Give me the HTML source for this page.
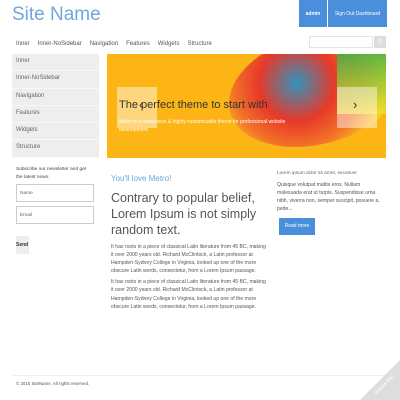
<!DOCTYPE html><html><head><style>
*{margin:0;padding:0;box-sizing:border-box}
html,body{width:400px;height:400px;overflow:hidden}
body{background:#fff;font-family:"Liberation Sans",sans-serif;color:#444;position:relative}
.a{position:absolute}
.nav span{margin-right:8px}
.side div{height:17.3px;background:#eee;border-bottom:1px solid #f8f8f8;padding:4px 0 0 4px;font-size:6px;color:#666}
p{font-size:5.1px;line-height:8.1px;color:#555}
</style></head><body>
<div class="a" style="left:12px;top:4px;font-size:19px;color:#6fa6dc;font-weight:300">Site Name</div>
<div class="a" style="left:299px;top:0;width:28px;height:27px;background:#4a8fdb;color:#fff;font-size:5px;font-weight:bold;text-align:center;line-height:29px">admin</div>
<div class="a" style="left:328px;top:0;width:59px;height:27px;background:#4a8fdb;color:#fff;font-size:5px;text-align:center;line-height:29px">Sign Out Dashboard</div>
<div class="a nav" style="left:16px;top:41px;font-size:6px;color:#555"><span>Inner</span><span>Inner-NoSidebar</span><span>Navigation</span><span>Features</span><span>Widgets</span><span>Structure</span></div>
<div class="a" style="left:309px;top:36px;width:64px;height:12px;border:1px solid #e4e4e4"></div>
<div class="a" style="left:374px;top:36px;width:12px;height:12px;background:#ddd;color:#fff;font-size:6px;text-align:center;line-height:12px">⚲</div>
<div class="a side" style="left:12px;top:54px;width:87px">
<div>Inner</div><div>Inner-NoSidebar</div><div>Navigation</div><div>Features</div><div>Widgets</div><div>Structure</div></div>
<div class="a" style="left:107px;top:54px;width:279px;height:104px;background:#fdb515;overflow:hidden">
<div class="a" style="left:120px;top:-20px;width:180px;height:110px;border-radius:50%;background:radial-gradient(circle at 40% 40%,#1a8fd0 0,#e52b2b 30%,#f06a2a 50%,#fbd023 70%,rgba(253,181,21,0) 72%);opacity:.9;transform:rotate(-15deg)"></div>
<div class="a" style="left:230px;top:0;width:50px;height:60px;background:linear-gradient(#3ab54a,#f5e02a);opacity:.8"></div>
<div class="a" style="left:10px;top:33px;width:40px;height:41px;background:rgba(255,255,255,.45)"></div>
<div class="a" style="left:230px;top:33px;width:40px;height:41px;background:rgba(255,255,255,.45)"></div>
<div class="a" style="left:12px;top:45px;font-size:11px;color:#333;white-space:nowrap;font-weight:300">The perfect theme to start with</div>
<div class="a" style="left:12px;top:64px;font-size:5px;color:#fff;width:190px;line-height:8px">Metro is a responsive &amp; highly customizable theme for professional website development.</div>
<div class="a" style="left:32px;top:43px;font-size:13px;color:#333;z-index:2">‹</div>
<div class="a" style="left:246px;top:43px;font-size:13px;color:#333;z-index:2">›</div>
</div>
<div class="a" style="left:16px;top:166px;width:78px;font-size:4.8px;line-height:8px;color:#444">Subscribe our newsletter and get the latest news.</div>
<div class="a" style="left:16px;top:184px;width:78px;height:18px;border:1px solid #ccc;font-size:4.8px;padding:6px 3px;color:#666">Name</div>
<div class="a" style="left:16px;top:206px;width:78px;height:18px;border:1px solid #ccc;font-size:4.8px;padding:6px 3px;color:#666">Email</div>
<div class="a" style="left:16px;top:236px;width:13px;height:18px;background:#eee;font-size:5px;font-weight:bold;padding-top:6px;color:#333">Send</div>
<div class="a" style="left:111px;top:174px;font-size:8px;color:#6fa6dc">You'll love Metro!</div>
<div class="a" style="left:111px;top:190px;width:160px;font-size:12.5px;line-height:16px;color:#555;font-weight:300">Contrary to popular belief, Lorem Ipsum is not simply random text.</div>
<div class="a" style="left:111px;top:243px;width:156px"><p>It has roots in a piece of classical Latin literature from 45 BC, making it over 2000 years old. Richard McClintock, a Latin professor at Hampden-Sydney College in Virginia, looked up one of the more obscure Latin words, consectetur, from a Lorem Ipsum passage.</p><p style="margin-top:3px">It has roots in a piece of classical Latin literature from 45 BC, making it over 2000 years old. Richard McClintock, a Latin professor at Hampden-Sydney College in Virginia, looked up one of the more obscure Latin words, consectetur, from a Lorem Ipsum passage.</p></div>
<div class="a" style="left:277px;top:171px;font-size:4.8px;color:#666">Lorem ipsum dolor sit amet, secesuer</div>
<div class="a" style="left:277px;top:181px;width:104px"><p>Quisque volutpat mattis eros. Nullam malesuada erat ut turpis. Suspendisse urna nibh, viverra non, semper suscipit, posuere a, pede...</p></div>
<div class="a" style="left:279px;top:218px;width:36px;height:17px;background:#4a8fdb;color:#fff;font-size:5px;text-align:center;line-height:17px">Read more</div>
<div class="a" style="left:12px;top:375px;width:374px;border-top:1px solid #f0f0f0"></div>
<div class="a" style="left:16px;top:381px;font-size:4.4px;color:#555">© 2015 SiteName. All rights reserved.</div>
<div class="a" style="left:360px;top:360px;width:40px;height:40px;background:#ddd;clip-path:polygon(100% 0,100% 100%,0 100%)"></div>
<div class="a" style="left:372px;top:382px;font-size:5px;color:#fff;transform:rotate(-45deg);white-space:nowrap">Resize Me!</div>
</body></html>
